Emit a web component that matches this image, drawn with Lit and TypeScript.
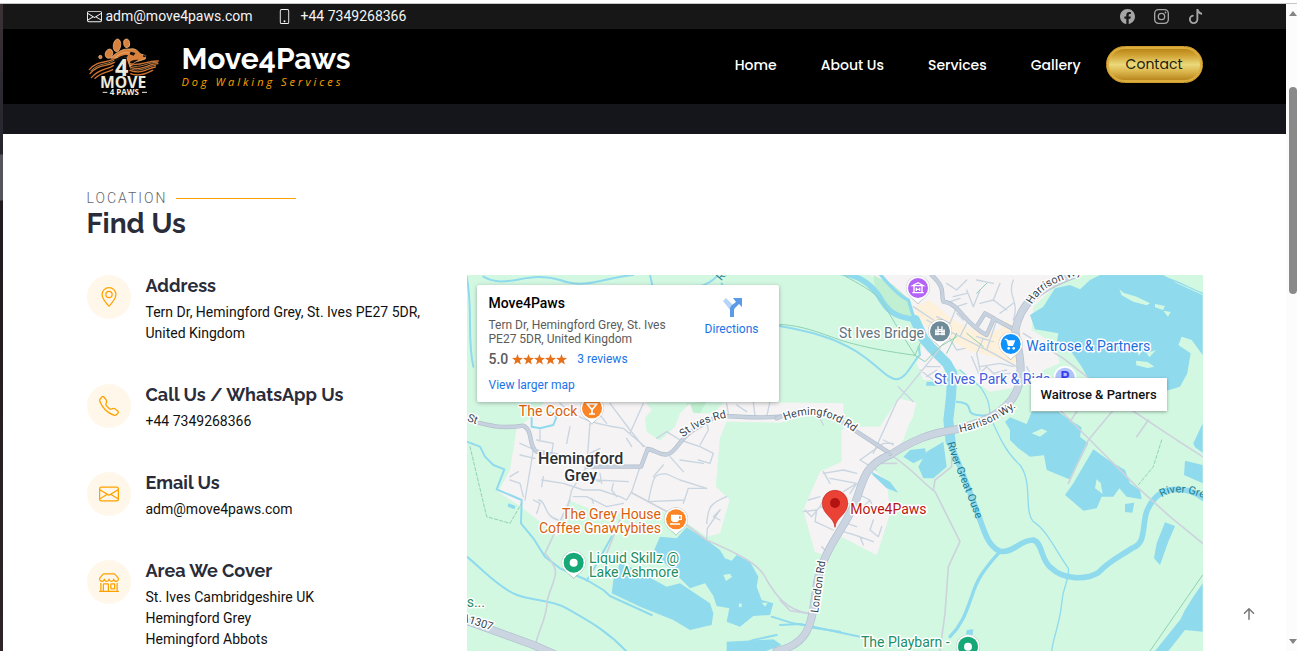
import { LitElement, html, svg, css } from "lit";
import { customElement, property } from "lit/decorators.js";

const ICONS: Record<string, string> = {
  envelope:
    "M0 4a2 2 0 0 1 2-2h12a2 2 0 0 1 2 2v8a2 2 0 0 1-2 2H2a2 2 0 0 1-2-2zm2-1a1 1 0 0 0-1 1v.217l7 4.2 7-4.2V4a1 1 0 0 0-1-1zm13 2.383-4.708 2.825L15 11.105zm-.034 6.876-5.64-3.471L8 9.583l-1.326-.795-5.64 3.47A1 1 0 0 0 2 13h12a1 1 0 0 0 .966-.741M1 11.105l4.708-2.897L1 5.383z",
  phone:
    "M11 1a1 1 0 0 1 1 1v12a1 1 0 0 1-1 1H5a1 1 0 0 1-1-1V2a1 1 0 0 1 1-1zM5 0a2 2 0 0 0-2 2v12a2 2 0 0 0 2 2h6a2 2 0 0 0 2-2V2a2 2 0 0 0-2-2zM8 14a1 1 0 1 0 0-2 1 1 0 0 0 0 2",
  facebook:
    "M16 8.049c0-4.446-3.582-8.05-8-8.05C3.58 0-.002 3.603-.002 8.05c0 4.017 2.926 7.347 6.75 7.951v-5.625h-2.03V8.05H6.75V6.275c0-2.017 1.195-3.131 3.022-3.131.876 0 1.791.157 1.791.157v1.98h-1.009c-.993 0-1.303.621-1.303 1.258v1.51h2.218l-.354 2.326H9.25V16c3.824-.604 6.75-3.934 6.75-7.951",
  instagram:
    "M4.7 0h6.6A4.7 4.7 0 0 1 16 4.7v6.6a4.7 4.7 0 0 1-4.7 4.7H4.700A4.700 4.700 0 0 1 0 11.300V4.700A4.700 4.700 0 0 1 4.700 0zM4.700 1.440A3.260 3.260 0 0 0 1.440 4.700v6.600a3.260 3.260 0 0 0 3.260 3.260h6.600a3.260 3.260 0 0 0 3.260-3.260V4.700a3.260 3.260 0 0 0-3.260-3.260zM8 3.890a4.110 4.110 0 1 1 0 8.220 4.110 4.110 0 0 1 0-8.220zm0 1.440a2.670 2.670 0 1 0 0 5.340 2.670 2.670 0 0 0 0-5.340zM12.270 2.770a.96.96 0 1 1 0 1.920.96.96 0 0 1 0-1.920z",
  tiktok:
    "M9 0h1.98c.144.715.54 1.617 1.235 2.512C12.895 3.389 13.797 4 15 4v2c-1.753 0-3.07-.814-4-1.829V11a5 5 0 1 1-5-5v2a3 3 0 1 0 3 3z",
  geo:
    "M12.166 8.94c-.524 1.062-1.234 2.12-1.96 3.07A32 32 0 0 1 8 14.58a32 32 0 0 1-2.206-2.57c-.726-.95-1.436-2.008-1.96-3.07C3.304 7.867 3 6.862 3 6a5 5 0 0 1 10 0c0 .862-.305 1.867-.834 2.94M8 16s6-5.686 6-10A6 6 0 0 0 2 6c0 4.314 6 10 6 10M8 8a2 2 0 1 1 0-4 2 2 0 0 1 0 4m0 1a3 3 0 1 0 0-6 3 3 0 0 0 0 6",
  telephone:
    "M3.654 1.328a.678.678 0 0 0-1.015-.063L1.605 2.3c-.483.484-.661 1.169-.45 1.77a17.6 17.6 0 0 0 4.168 6.608 17.6 17.6 0 0 0 6.608 4.168c.601.211 1.286.033 1.77-.45l1.034-1.034a.678.678 0 0 0-.063-1.015l-2.307-1.794a.68.68 0 0 0-.58-.122l-2.19.547a1.75 1.75 0 0 1-1.657-.459L5.482 8.062a1.75 1.75 0 0 1-.46-1.657l.548-2.19a.68.68 0 0 0-.122-.58zM1.884.511a1.745 1.745 0 0 1 2.612.163L6.29 2.98c.329.423.445.974.315 1.494l-.547 2.19a.68.68 0 0 0 .178.643l2.457 2.457a.68.68 0 0 0 .644.178l2.189-.547a1.75 1.75 0 0 1 1.494.315l2.306 1.794c.829.645.905 1.87.163 2.611l-1.034 1.034c-.74.74-1.846 1.065-2.877.702a18.6 18.6 0 0 1-7.01-4.42 18.6 18.6 0 0 1-4.42-7.009c-.362-1.03-.037-2.137.703-2.877z",
  shop:
    "M2.97 1.35A1 1 0 0 1 3.73 1h8.54a1 1 0 0 1 .76.35l2.609 3.044A1.5 1.5 0 0 1 16 5.37v.255a2.375 2.375 0 0 1-4.25 1.458A2.37 2.37 0 0 1 9.875 8 2.37 2.37 0 0 1 8 7.083 2.37 2.37 0 0 1 6.125 8a2.37 2.37 0 0 1-1.875-.917A2.375 2.375 0 0 1 0 5.625V5.37a1.5 1.5 0 0 1 .361-.976zm1.78 4.275a1.375 1.375 0 0 0 2.75 0 .5.5 0 0 1 1 0 1.375 1.375 0 0 0 2.75 0 .5.5 0 0 1 1 0 1.375 1.375 0 1 0 2.75 0V5.37a.5.5 0 0 0-.12-.325L12.27 2H3.73L1.12 5.045A.5.5 0 0 0 1 5.37v.255a1.375 1.375 0 0 0 2.75 0 .5.5 0 0 1 1 0M1.5 8.5A.5.5 0 0 1 2 9v6h1v-5a1 1 0 0 1 1-1h3a1 1 0 0 1 1 1v5h6V9a.5.5 0 0 1 1 0v6h.5a.5.5 0 0 1 0 1H.5a.5.5 0 0 1 0-1H1V9a.5.5 0 0 1 .5-.5M4 15h3v-5H4zm5-5a1 1 0 0 1 1-1h2a1 1 0 0 1 1 1v3a1 1 0 0 1-1 1h-2a1 1 0 0 1-1-1zm3 0h-2v3h2z",
  arrowUp:
    "M8 12a.5.5 0 0 0 .5-.5V5.707l2.146 2.147a.5.5 0 0 0 .708-.708l-3-3a.5.5 0 0 0-.708 0l-3 3a.5.5 0 1 0 .708.708L7.5 5.707V11.5a.5.5 0 0 0 .5.5",
};

const icon = (name: string) => html`
  <svg class="icon" viewBox="0 0 16 16" aria-hidden="true">
    <path fill="currentColor" fill-rule="evenodd" d=${ICONS[name]}></path>
  </svg>
`;

@customElement("info-item")
export class InfoItem extends LitElement {
  @property() icon = "geo";
  @property() heading = "";
  @property({ type: Array }) lines: string[] = [];

  static styles = css`
    :host {
      display: flex;
      gap: 15px;
    }
    .badge {
      flex: none;
      display: grid;
      place-items: center;
      width: 44px;
      height: 44px;
      border-radius: 50%;
      background: #fff7ea;
      color: #ffa200;
    }
    .icon {
      width: 20px;
      height: 20px;
      display: block;
    }
    h3 {
      margin: 0 0 5px;
      font: 700 18px/22px Raleway, Lato, sans-serif;
      color: #2a2c39;
    }
    p {
      margin: 0;
      font-size: 14px;
      line-height: 21px;
      color: #111;
    }
  `;

  render() {
    return html`
      <div class="badge">${icon(this.icon)}</div>
      <div>
        <h3>${this.heading}</h3>
        ${this.lines.map((l) => html`<p>${l}</p>`)}
      </div>
    `;
  }
}

const pin = (x: number, y: number, fill: string, glyph: unknown) => svg`
  <g transform="translate(${x} ${y})">
    <path class="pin-shadow" d="M0 49C-8 36-36 26-36 0a36 36 0 0 1 72 0C36 26 8 36 0 49z"></path>
    <path fill="#fff" d="M0 46C-8 34-35 26-35 0a35 35 0 0 1 70 0C35 26 8 34 0 46z"></path>
    <circle r="30" fill=${fill}></circle>
    ${glyph}
  </g>
`;

@customElement("map-view")
export class MapView extends LitElement {
  static styles = css`
    :host {
      display: block;
      position: relative;
      overflow: hidden;
      background: #d3f8e2;
      font-family: Roboto, sans-serif;
    }
    .canvas {
      position: absolute;
      inset: 0;
      width: 100%;
      height: 100%;
    }
    .town { fill: #f5f3f3; }
    .shops { fill: #fdf1dc; }
    .park { fill: #c0f0d1; }
    .land { fill: #d3f8e2; }
    .lake { fill: #90daee; }
    .line { fill: none; stroke-linecap: round; stroke-linejoin: round; }
    .water { stroke: #90daee; }
    .w6 { stroke-width: 6; }
    .w4 { stroke-width: 4; }
    .w10 { stroke-width: 10; }
    .w17 { stroke-width: 17; }
    .w30 { stroke-width: 30; }
    .street { stroke: #c9d5e1; stroke-width: 4; }
    .lane { stroke: #cdd3dc; stroke-width: 5; }
    .trail { stroke: #8fd2b4; stroke-width: 3; }
    .dash { stroke-dasharray: 10 6; }
    .casing { stroke: #b3bfce; stroke-width: 13; }
    .road { stroke: #c8d2df; stroke-width: 9; }
    .casing-wide { stroke: #b3bfce; stroke-width: 24; }
    .road-wide { stroke: #cbd5e1; stroke-width: 20; }
    .pin-shadow { fill: #5f6b70; opacity: 0.4; }
    text {
      font-size: 42px;
      paint-order: stroke;
      stroke: #fff;
      stroke-width: 9px;
      stroke-linejoin: round;
    }
    .small { font-size: 33px; fill: #36434f; }
    .river { stroke: none; fill: #1a7f92; }
    .place { font-size: 48px; font-weight: 500; fill: #2c3033; }
    .food { fill: #d9610c; }
    .leisure { fill: #1b8f66; }
    .civic { fill: #5c7480; }
    .store { fill: #1a6fe0; }
    .parking { fill: #4260dd; }
    .bold { font-weight: 700; fill: #3c3cf0; stroke: none; }
    .brand { fill: #bb1512; }
    .end { text-anchor: end; }
    .mid { text-anchor: middle; }

    .card {
      position: absolute;
      top: 10px;
      left: 10px;
      box-sizing: border-box;
      width: 302px;
      padding: 10px 20px 10px 12px;
      display: flex;
      justify-content: space-between;
      background: #fff;
      border-radius: 2px;
      box-shadow: 0 1px 4px rgba(0, 0, 0, 0.3);
      font-size: 12px;
      line-height: 14px;
      color: #5b5b5b;
    }
    a { color: #1a73e8; text-decoration: none; }
    h3 {
      margin: 0 0 7px;
      font-size: 14px;
      line-height: 16px;
      font-weight: 500;
      color: #000;
    }
    address { width: 200px; font-style: normal; }
    .rating {
      display: flex;
      align-items: center;
      margin: 5px 0 11px;
      line-height: 16px;
    }
    .score { font-size: 14px; font-weight: 500; margin-right: 4px; }
    .stars { width: 55px; height: 11px; margin-right: 10px; }
    .directions {
      display: flex;
      flex-direction: column;
      align-items: center;
      gap: 3px;
    }
    .directions svg { width: 24px; height: 24px; }
    .tooltip {
      position: absolute;
      top: 103px;
      left: 564px;
      padding: 9px 10px;
      background: #fff;
      box-shadow: 0 1px 3px rgba(0, 0, 0, 0.35);
      font-size: 13px;
      line-height: 15px;
      font-weight: 500;
      color: #111;
    }
  `;

  private terrain() {
    return svg`
      <g>
        <path class="park" d="M680 400 740 395 720 430 690 425zM1560 15h60l-30 50-50-20z"></path>
        <path class="town" d="M170 475 215 440 255 395 555 395 575 420 555 445 560 485 600 512 645 470 660 430 690 400 700 430 760 430 795 395 1150 400 1150 500 1145 575 1080 605 1030 720 1065 845 1095 855 1145 800 1250 855 1290 730 1280 640 1230 605 1290 560 1330 510 1370 400 1315 385 1260 470 1180 470 1100 420 960 460 800 455 780 505 768 650 810 685 780 790 740 800 640 730 560 720 470 730 385 715 325 690 290 800 240 755 185 712 115 665 150 600z"></path>
        <path class="land" d="M800 455 960 458 1075 425 1150 435 1150 500 1145 575 1080 605 1030 720 810 690 768 650 780 505z"></path>
        <path class="town" d="M1145 480 1200 470 1270 490 1320 390 1365 395 1360 440 1310 520 1290 560 1240 600 1280 630 1290 730 1250 855 1145 800 1095 855 1065 845 1030 720 1080 605 1145 575z"></path>
        <path class="town" d="M1230 15 1820 15 1720 110 1715 180 1780 220 1800 280 1750 300 1680 350 1590 365 1500 300 1460 290 1430 330 1390 330 1370 280 1390 220 1360 160 1320 80z"></path>
        <path class="shops" d="M1365 110 1410 90 1480 150 1560 190 1620 180 1640 150 1680 190 1690 290 1600 260 1520 240 1440 190 1370 150z"></path>
        <path class="park" d="M1240 15 1300 45 1350 90 1355 140 1310 140 1280 100 1245 70z"></path>
      </g>`;
  }

  private waters() {
    return svg`
      <g transform="translate(960 0)">
        <path class="lake" d="M870 45 900 58 930 30 960 15 1150 15 1190 40 1268 75 1268 255 1235 210 1205 200 1195 225 1232 250 1222 310 1200 350 1160 362 1100 350 930 335 905 290 870 240 830 220 835 190 765 178 750 135 790 110 825 55z"></path>
        <path class="land" d="M1018 58 1030 68 1070 80 1110 100 1100 106 1060 95 1025 76zM1125 102l30 6-6 12-24-8zM1150 122l22 4-8 14zM1070 240l15 4-8 14zM1100 250l28-10-20 22zM1068 272l35 4 20 14-20 4-34-8z"></path>
        <path class="lake" d="M675 455 690 442 740 462 755 425 835 425 870 450 905 472 900 500 925 520 900 570 868 628 800 600 792 556 750 560 715 535 690 510 690 480z"></path>
        <path class="land" d="M755 490 785 476 802 484 780 500z"></path>
        <path class="lake" d="M940 538 985 570 1035 600 1050 640 1080 660 1085 688 1040 680 1018 655 1000 680 965 680 950 715 910 722 855 675 880 640z"></path>
        <path class="land" d="M950 628 962 640 968 672 945 655z"></path>
        <path class="lake" d="M1240 520 1268 460 1268 548 1245 532zM1215 572 1268 585 1268 640 1212 615zM1035 702l28-4-6 30-22-2zM1155 757 1185 768 1165 815 1140 885 1122 865 1130 820zM1240 980 1268 940 1268 1085 1215 1080 1165 1143 1125 1143 1200 1050 1215 1020z"></path>
        <path class="lake" d="M370 560 390 540 435 535 440 560 400 580zM440 545 490 515 500 590 460 625 430 625 415 590zM440 335h50l-6 12h-46zM275 605 330 635 355 668 320 655 278 615zM560 1080 580 1078 578 1095 558 1093z"></path>
        <path class="line water w17" d="M170 5C230 15 265 35 295 75 320 120 340 142 405 148"></path>
        <path class="line water w10" d="M290 0C330 50 360 80 385 90 392 110 395 130 405 148"></path>
        <path class="line water w30" d="M405 150 430 205 455 235L500 280 517 310 513 380 505 450 512 515"></path>
        <path class="line water w17" d="M505 510C530 560 560 640 590 720 620 810 630 830 660 844 700 850 720 810 760 810 790 820 780 870 815 895 850 930 920 930 955 908 990 870 1020 860 1055 835 1100 820 1085 770 1100 725 1110 700 1130 670 1165 660 1200 655 1240 660 1270 685"></path>
        <path class="line water w10" d="M655 850C610 900 590 930 575 980 560 1020 550 1060 510 1100"></path>
        <path class="line water w6" d="M-175 40C-120 160-60 155 0 168 70 182 150 195 230 245 300 290 320 328 352 328 385 320 400 270 420 255L416 230M530 395C590 400 550 430 590 435 620 440 620 430 640 440M0 1065 60 1062 240 1100"></path>
        <path class="line water w4" d="M540 300 600 350C630 390 630 420 630 440 650 480 670 540 720 585 760 640 730 720 760 755 800 780 820 830 865 895 870 930 850 940 845 1000 840 1060 820 1100 815 1143"></path>
        <path class="line water w4" d="M1130 15C1190 30 1210 45 1268 70"></path>
      </g>
      <g transform="translate(0 510)">
        <path class="lake" d="M600 290 650 295 680 262 740 300 780 330 795 355 815 362 830 345 870 365 895 410 890 440 905 480 940 490 930 525 880 528 840 560 800 545 808 505 770 498 760 468 735 430 690 445 660 415 640 395 580 335z"></path>
        <path class="lake" d="M480 370 500 375 620 440 660 430 750 490 760 520 755 555 690 570 640 540 540 500 455 460 460 420zM800 605 940 598 965 615 900 640 800 640zM145 190l22 8-4 10-20-8z"></path>
        <path class="land" d="M790 405l20-4 6 10-18 12zM838 490l8 2-2 10-8-2zM905 488l18 0-8 12z"></path>
        <path class="line water w6" d="M20 5 60 20 75 50 100 75 133 88 110 148 185 180 183 250 220 295 255 350 300 385 380 420 430 450 450 468 575 525M20 350C60 380 100 430 160 460 210 485 270 475 320 505 380 540 440 570 500 635M455 290 430 335 405 380 380 422M935 530 1000 550 1030 555M1040 560 1140 575M800 635 880 600 950 585"></path>
      </g>
      <path class="line water w6" d="M20 20C40 120 20 200 40 290M70 20C140 60 200 0 300 30 380 60 440 20 520 15M570 15 580 60M630 50C700 60 740 50 770 20M215 430 215 470 240 475 280 465 290 440 265 425"></path>`;
  }

  private streets() {
    return svg`
      <path class="line street" transform="translate(180 390)" d="M40 150 15 300M210 70 200 200 155 270 130 380M120 10C170 60 240 75 310 85L375 140M270 10 330 90 370 140M370 10 330 100M360 200 335 275 320 300M385 305C400 230 400 220 440 222L480 240 560 265M490 310 505 265 560 265M620 290C570 310 565 320 560 370M65 240 130 250 190 270 240 270 300 290 320 300M70 230 65 260M160 290 200 290 260 320 310 310M40 300 60 310 50 340M55 300C80 300 70 350 115 360M50 120 100 130 95 160M60 90 60 125M140 130 150 80M240 145 210 160M320 115 335 140M410 115 440 95 480 120 540 140 580 160 570 190 535 180M540 135 565 90 560 60M450 170 490 215M430 195 400 230M480 180 550 190M0 130 45 150M0 165 45 175M280 250 275 270 290 290M230 240 325 245M240 220 245 250M385 305 495 300M600 330 580 350 600 360M190 230 240 245M220 310 215 295M-30 240 0 250 10 290M-30 230-5 215"></path>
      <path class="line street" d="M420 435 440 460M800 400 805 430M880 395 885 440M930 395 920 440M860 425 830 405M740 810 742 775 780 720"></path>
      <path class="line lane" d="M515 668 640 735 740 810C830 850 900 880 920 930 950 980 980 1020 1045 1030M330 690 255 850C310 910 280 920 262 990 260 1050 235 1080 228 1120M440 850 480 750"></path>
      <g transform="translate(960 0)">
        <path class="line street" d="M400 110 460 150M500 40 530 60 560 30M520 80 560 70M470 140 510 160 530 110 560 100M495 100 540 85M560 60 580 110 600 60M590 30 640 40M530 130 550 150M440 150 540 200 640 250 710 290M590 200 640 215M560 160 540 200M500 190 530 240 555 235M610 205 590 250 600 300M650 150 620 240M700 30C680 80 720 90 700 150M680 120 640 90 600 100M640 90 660 40M600 290 660 280 700 290M600 310 620 290 640 310 680 300M575 260 600 320 690 310M440 290 480 290M420 300 460 330M440 320 470 300M480 235 350 395 280 550M355 350 400 395M310 510 340 525M120 445 130 465M660 130 700 100M740 290 750 310"></path>
        <path class="line trail" d="M0 163C70 168 110 185 180 210 260 235 330 245 405 256M190 15C240 45 280 60 310 100L345 160 405 256 420 220M405 256 435 275 480 230 530 200M500 250 530 190M560 190 610 230M590 70 620 40M1268 915 1110 1143"></path>
        <path class="line lane" d="M730 190 850 265 1010 390 1160 490 1268 560M720 290 760 340 870 450 930 510 1070 650 1170 740 1268 820M1000 420 925 510 865 640M870 455 890 425M1105 450 1070 500M1190 510 1268 560M340 560C400 600 430 640 465 665L540 815 505 890 495 1030 480 1143M460 660 465 630 515 590 515 560M350 580 300 580M0 990 30 1022 85 1030"></path>
        <path class="line trail dash" d="M1145 510 1120 590 1072 648"></path>
        <path class="line street" d="M130 605 150 640M130 610 190 600 230 610M150 625 230 640 210 670M230 640 190 665M85 690 120 680M75 720 95 740 120 710 160 725M70 725 110 720 105 755 160 780M120 710 130 690M230 670 270 690 285 725M200 700 250 710 270 690M190 785 240 800 250 825M210 790 280 815M185 755 230 770M270 780 295 800 305 770M270 780 280 750M125 830 135 840M290 600 240 570 310 520 340 520"></path>
      </g>
      <path class="line trail dash" d="M30 530 80 740 150 760 185 700"></path>
      <g class="line">
        <path class="casing" d="M25 450C80 465 120 478 190 467 220 480 205 530 230 545L290 556M380 590 543 590 563 537C590 540 600 560 625 552 650 545 655 510 700 480L760 445C800 430 850 448 960 440"></path>
        <path class="road" d="M25 450C80 465 120 478 190 467 220 480 205 530 230 545L290 556M380 590 543 590 563 537C590 540 600 560 625 552 650 545 655 510 700 480L760 445C800 430 850 448 960 440"></path>
      </g>
      <g class="line" transform="translate(960 0)">
        <path class="casing" d="M-10 445C80 405 140 420 200 465L330 550M455 15C500 60 480 60 490 95 540 100 550 160 620 195L642 145 615 130 590 170M640 145 705 180"></path>
        <path class="road" d="M-10 445C80 405 140 420 200 465L330 550M455 15C500 60 480 60 490 95 540 100 550 160 620 195L642 145 615 130 590 170M640 145 705 180"></path>
        <path class="casing-wide" d="M330 555C400 510 450 490 520 480 640 450 700 410 718 340 730 270 710 230 706 180 720 110 760 60 880 15M330 555C240 590 250 650 220 710 190 780 120 850 108 960 95 1040 100 1120-10 1143M-960 1045-740 1125-660 1160"></path>
        <path class="road-wide" d="M330 555C400 510 450 490 520 480 640 450 700 410 718 340 730 270 710 230 706 180 720 110 760 60 880 15M330 555C240 590 250 650 220 710 190 780 120 850 108 960 95 1040 100 1120-10 1143M-960 1045-740 1125-660 1160"></path>
        <circle cx="330" cy="553" r="4" fill="#d3f8e2" stroke="#b3bfce" stroke-width="3"></circle>
      </g>`;
  }

  private labels() {
    return svg`
      <defs>
        <path id="st-ives-rd" d="M670 503C700 475 740 455 810 440"></path>
        <path id="hemingford-rd" d="M974 452C1040 425 1100 425 1178 484"></path>
        <path id="harrison-s" d="M1500 487C1560 475 1620 450 1690 395"></path>
        <path id="harrison-n" d="M1716 104C1740 60 1780 30 1900 4"></path>
        <path id="ouse" d="M1461 519C1480 590 1520 660 1560 785"></path>
        <path id="ouse-e" d="M2105 682C2150 655 2200 660 2380 750"></path>
        <path id="london" d="M1074 1030 1098 860"></path>
      </defs>
      <text class="small"><textPath href="#st-ives-rd">St Ives Rd</textPath></text>
      <text class="small"><textPath href="#hemingford-rd">Hemingford Rd</textPath></text>
      <text class="small"><textPath href="#harrison-s">Harrison Wy.</textPath></text>
      <text class="small"><textPath href="#harrison-n">Harrison Wy.</textPath></text>
      <text class="small river"><textPath href="#ouse">River Great Ouse</textPath></text>
      <text class="small river"><textPath href="#ouse-e">River Great Ouse</textPath></text>
      <text class="small"><textPath href="#london">London Rd</textPath></text>
      <text class="small" transform="translate(4 1052) rotate(18)">A1307</text>
      <text class="small" transform="translate(20 452) rotate(20)">St</text>
      <text class="small river" transform="translate(784 34) rotate(-50)">Ri</text>
      <text class="leisure" x="20" y="1010">s...</text>

      ${pin(396, 415, "#fb8426", svg`<path fill="none" stroke="#fff" stroke-width="5" d="M-14-13h28L0 4zM0 2v14M-9 17h18"></path>`)}
      <text class="food end" x="352" y="438">The Cock</text>
      <text class="place mid" x="362" y="583">Hemingford</text>
      <text class="place mid" x="362" y="632">Grey</text>
      ${pin(648, 748, "#fb8426", svg`<path fill="#fff" d="M-15-14h24V4h-4v4h-16v-4h-4zM-18 12h30v4h-30z"></path><path fill="none" stroke="#fff" stroke-width="4" d="M8-11h8v11H8"></path>`)}
      <text class="food end" x="603" y="748">The Grey House</text>
      <text class="food end" x="603" y="790">Coffee Gnawtybites</text>
      ${pin(341, 878, "#17a877", svg`<circle r="12" fill="#fff"></circle>`)}
      <text class="leisure" x="387" y="880">Liquid Skillz @</text>
      <text class="leisure" x="387" y="922">Lake Ashmore</text>
      ${pin(1374, 54, "#b463f7", svg`<path fill="none" stroke="#fff" stroke-width="4" d="M-16-7 0-16 16-7zM-12-5V12M12-5V12M-17 14h34M-5-1V9M5-1V9M-5 4H5"></path>`)}
      ${pin(1440, 184, "#708b98", svg`<path fill="none" stroke="#fff" stroke-width="4" d="M-15 0H15M-15 8H15M-6-15V12M6-15V12M-12-6V12M12-6V12M-6-5H6"></path>`)}
      <text class="civic end" x="1392" y="204">St Ives Bridge</text>
      <g transform="translate(1815 322)">
        <circle r="34" fill="#fff"></circle>
        <circle r="29" fill="#b1c3fb"></circle>
      </g>
      <text class="mid bold" x="1815" y="336">P</text>
      <text class="parking" x="1422" y="342">St Ives Park &amp; Ride</text>
      ${pin(1652, 222, "#0f92fb", svg`<path fill="#fff" d="M-18-16h7l3 5h22l-7 17H-8l-5-18h-5z"></path><circle cx="-6" cy="13" r="4" fill="#fff"></circle><circle cx="9" cy="13" r="4" fill="#fff"></circle>`)}
      <text class="store" x="1699" y="243">Waitrose &amp; Partners</text>
      <path fill="#ea4335" stroke="#c5221f" stroke-width="2" d="M1125 772C1122 740 1087 735 1087 699a38 38 0 0 1 76 0C1163 735 1128 740 1125 772z"></path>
      <circle cx="1125" cy="699" r="15" fill="#b31412"></circle>
      <text class="brand" x="1171" y="732">Move4Paws</text>
      ${pin(1524, 1130, "#17a877", svg`<circle r="12" fill="#fff"></circle>`)}
      <text class="leisure" x="1203" y="1131">The Playbarn -</text>`;
  }

  render() {
    return html`
      <svg class="canvas" viewBox="21 15 2208 1128" preserveAspectRatio="xMidYMin slice" role="img" aria-label="Map">
        ${this.terrain()} ${this.waters()} ${this.streets()} ${this.labels()}
      </svg>
      <div class="card">
        <div>
          <h3>Move4Paws</h3>
          <address>Tern Dr, Hemingford Grey, St. Ives PE27 5DR, United Kingdom</address>
          <div class="rating">
            <span class="score">5.0</span>
            <svg class="stars" viewBox="0 0 55 11" aria-hidden="true">
              ${[0, 11, 22, 33, 44].map(
                (x) => svg`<path fill="#e7711b" transform="translate(${x} 0)" d="M5.500 0 6.900 3.800 11 4 7.800 6.500 8.900 10.500 5.500 8.200 2.100 10.500 3.200 6.500 0 4 4.100 3.800z"></path>`
              )}
            </svg>
            <a href="#reviews">3 reviews</a>
          </div>
          <a href="#larger-map">View larger map</a>
        </div>
        <a class="directions" href="#directions">
          <svg viewBox="0 0 24 24" aria-hidden="true">
            <path fill="#b7d3f8" d="M3 6 6 3l7 7-3 5z"></path>
            <path fill="#5a9ae6" d="M10 22v-8q0-2 1.500-3.500L16 7l-3-4h9v9l-3-3-4 4q-1 1-1 2v7z"></path>
          </svg>
          Directions
        </a>
      </div>
      <div class="tooltip" role="tooltip">Waitrose &amp; Partners</div>
    `;
  }
}

@customElement("app-root")
export class AppRoot extends LitElement {
  static styles = css`
    :host {
      display: flex;
      flex-direction: column;
      height: 100vh;
      overflow: hidden;
      background: #fff;
      font-family: Roboto, sans-serif;
    }
    a { color: inherit; text-decoration: none; }
    .icon { display: block; width: 15px; height: 15px; }
    .edge {
      flex: none;
      height: 3px;
      border-bottom: 1px solid #c6c6c6;
    }
    .frame { flex: 1; min-height: 0; display: flex; }
    .backdrop {
      flex: none;
      width: 3px;
      background: linear-gradient(#3b3236 0, #2b2830 100px, #26252f 150px, #55535c 151px, #55535c 196px, #1f1b1f 197px, #2f2427 100%);
    }
    .page {
      flex: 1;
      min-width: 0;
      display: flex;
      flex-direction: column;
      overflow: hidden;
      position: relative;
    }
    .container {
      box-sizing: border-box;
      width: 100%;
      max-width: 1140px;
      margin: 0 auto;
      padding: 0 12px;
    }
    .row { display: flex; align-items: center; }

    .topbar {
      flex: none;
      background: #171717;
      color: #f4f4f4;
      font-size: 14px;
      line-height: 25px;
    }
    .contact { display: flex; align-items: center; gap: 4px; }
    .phone { margin-left: 24px; gap: 9px; }
    .social { margin-left: auto; display: flex; gap: 19px; color: #a5a5a5; }

    .header { flex: none; background: #000; color: #fff; }
    .header .row { height: 75px; }
    .logo { width: 72px; height: 60px; margin-right: 23px; }
    .logo text { font-family: "Open Sans", sans-serif; font-weight: 700; fill: #eeeadb; }
    .brand { display: flex; align-items: center; }
    .brand h1 {
      margin: 0;
      font: 700 30px/30px Raleway, "Open Sans", sans-serif;
    }
    .brand p {
      margin: 0;
      font: italic 500 11px/16px "Open Sans", sans-serif;
      letter-spacing: 3px;
      color: #ffa200;
    }
    nav {
      margin-left: auto;
      padding-bottom: 4px;
      display: flex;
      align-items: center;
      gap: 44px;
      font: 500 14px/20px Poppins, Inter, sans-serif;
    }
    .cta {
      box-sizing: border-box;
      margin-left: -19px;
      padding: 7px 19px;
      border: 1px solid #cf9d2c;
      border-radius: 20px;
      font-weight: 400;
      line-height: 21px;
      color: #211a08;
      background: linear-gradient(#b37c0d, #d2a436 25%, #ead97a 50%, #dcb74e 70%, #b07c12);
      box-shadow: inset 0 0 0 2px #dcae3e;
    }
    .band { flex: none; height: 30px; background: #15161b; }

    .content {
      flex: 1;
      min-height: 0;
      display: flex;
      flex-direction: column;
      padding-top: 56px;
    }
    .eyebrow {
      margin: 0;
      display: flex;
      align-items: center;
      gap: 9px;
      font-size: 14px;
      font-weight: 300;
      line-height: 16px;
      letter-spacing: 2px;
      color: #66666e;
    }
    .eyebrow::after {
      content: "";
      width: 120px;
      height: 1px;
      background: #ffa200;
    }
    h2 {
      margin: 0 0 33px;
      font: 700 28px/36px Raleway, Lato, sans-serif;
      color: #2a2c39;
    }
    .columns {
      flex: 1;
      min-height: 0;
      display: grid;
      grid-template-columns: repeat(12, minmax(0, 1fr));
      column-gap: 24px;
    }
    .info { grid-column: span 4; display: flex; flex-direction: column; gap: 40px; }
    map-view { grid-column: span 8; }

    .to-top {
      position: absolute;
      right: 15px;
      bottom: 15px;
      width: 44px;
      height: 44px;
      padding: 0;
      border: 0;
      background: none;
      color: #777;
      display: grid;
      place-items: center;
    }
    .to-top .icon { width: 24px; height: 24px; }

    .scrollbar {
      flex: none;
      width: 11px;
      background: #fcfcfc;
      display: flex;
      flex-direction: column;
      align-items: flex-end;
      overflow: hidden;
    }
    .arrow { flex: none; width: 8px; height: 5px; margin: 7px 0; background: #858585; }
    .up { clip-path: polygon(50% 0, 100% 100%, 0 100%); }
    .down { clip-path: polygon(0 0, 100% 0, 50% 100%); }
    .track { flex: 1; width: 8px; padding-top: 64px; box-sizing: border-box; }
    .thumb { height: 38%; border-radius: 4px; background: #8a8a8a; }
  `;

  private items = [
    { icon: "geo", heading: "Address", lines: ["Tern Dr, Hemingford Grey, St. Ives PE27 5DR, United Kingdom"] },
    { icon: "telephone", heading: "Call Us / WhatsApp Us", lines: ["+44 7349268366"] },
    { icon: "envelope", heading: "Email Us", lines: ["adm@move4paws.com"] },
    { icon: "shop", heading: "Area We Cover", lines: ["St. Ives Cambridgeshire UK", "Hemingford Grey", "Hemingford Abbots"] },
  ];

  private logo() {
    return html`
      <svg class="logo" viewBox="21 18 216 180" role="img" aria-label="Move 4 Paws logo">
        <g fill="#d9813c" stroke="#f6c48d" stroke-width="2">
          <ellipse cx="61" cy="78" rx="5" ry="5"></ellipse>
          <ellipse cx="87" cy="68" rx="11" ry="14" transform="rotate(20 87 68)"></ellipse>
          <ellipse cx="111" cy="43" rx="11" ry="19" transform="rotate(8 111 43)"></ellipse>
          <ellipse cx="140" cy="37" rx="9" ry="13" transform="rotate(-10 140 37)"></ellipse>
          <path d="M92 82C110 62 130 52 150 54 165 50 175 60 180 68L197 74 196 84 178 90C165 92 160 96 150 108L140 80z"></path>
        </g>
        <path fill="#111" d="M152 62l14 4-5 8-12-4zM190 72l8 2-2 5-7-2zM100 92c12-14 30-22 44-20l-4 8c-14 0-28 6-36 16zM150 92c10-6 16-6 26-6l-10 6-14 10z"></path>
        <g fill="none" stroke="#cf7430" stroke-width="4" stroke-linecap="round">
          <path d="M28 116C55 85 75 100 105 82M30 128C55 98 80 108 103 94M34 140C60 110 80 118 100 104M45 142C65 122 80 126 98 116"></path>
          <path d="M150 98C180 108 200 88 235 90M150 108C185 122 205 98 234 98M150 118C185 132 205 110 226 108M152 128C180 140 205 124 218 118"></path>
        </g>
        <path fill="none" stroke="#f3b878" stroke-width="2" d="M32 120C60 92 80 104 103 87M150 103C182 114 202 93 234 94M150 113C185 126 205 104 228 103M105 80C120 66 135 62 148 66"></path>
        <text x="105" y="134" font-size="70" stroke="#000" stroke-width="4" paint-order="stroke">4</text>
        <text x="60" y="170" font-size="47">MOVE</text>
        <text x="89" y="191" font-size="24">4 PAWS</text>
        <path stroke="#eeeadb" stroke-width="3" d="M68 184h14M186 184h15"></path>
      </svg>
    `;
  }

  render() {
    return html`
      <div class="edge"></div>
      <div class="frame">
        <div class="backdrop"></div>
        <div class="page">
          <div class="topbar">
            <div class="container row">
              <a class="contact" href="mailto:adm@move4paws.com">${icon("envelope")}adm@move4paws.com</a>
              <a class="contact phone" href="tel:+447349268366">${icon("phone")}+44 7349268366</a>
              <div class="social">
                <a href="#facebook" aria-label="Facebook">${icon("facebook")}</a>
                <a href="#instagram" aria-label="Instagram">${icon("instagram")}</a>
                <a href="#tiktok" aria-label="TikTok">${icon("tiktok")}</a>
              </div>
            </div>
          </div>
          <header class="header">
            <div class="container row">
              <a class="brand" href="#home">
                ${this.logo()}
                <div>
                  <h1>Move4Paws</h1>
                  <p>Dog Walking Services</p>
                </div>
              </a>
              <nav>
                <a href="#home">Home</a>
                <a href="#about">About Us</a>
                <a href="#services">Services</a>
                <a href="#gallery">Gallery</a>
                <a class="cta" href="#contact">Contact</a>
              </nav>
            </div>
          </header>
          <div class="band"></div>
          <main class="content container">
            <p class="eyebrow">LOCATION</p>
            <h2>Find Us</h2>
            <div class="columns">
              <div class="info">
                ${this.items.map(
                  (i) => html`<info-item .icon=${i.icon} .heading=${i.heading} .lines=${i.lines}></info-item>`
                )}
              </div>
              <map-view></map-view>
            </div>
          </main>
          <button class="to-top" aria-label="Back to top">${icon("arrowUp")}</button>
        </div>
        <div class="scrollbar" aria-hidden="true">
          <div class="arrow up"></div>
          <div class="track"><div class="thumb"></div></div>
          <div class="arrow down"></div>
        </div>
      </div>
    `;
  }
}
